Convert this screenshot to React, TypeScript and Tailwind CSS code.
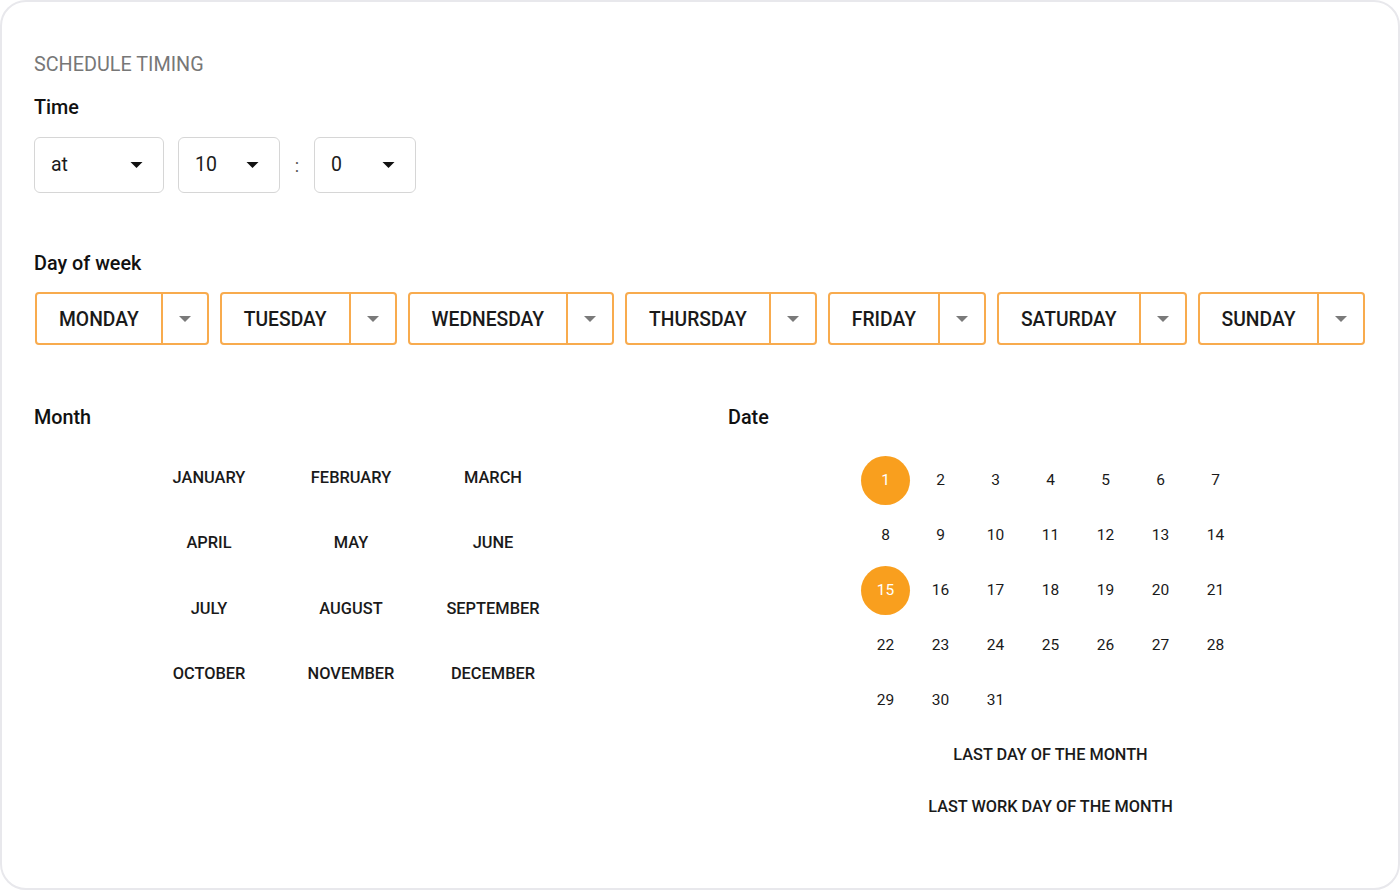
import React from 'react';

const DAYS = ['MONDAY', 'TUESDAY', 'WEDNESDAY', 'THURSDAY', 'FRIDAY', 'SATURDAY', 'SUNDAY'];
const MONTHS = [
  'JANUARY', 'FEBRUARY', 'MARCH',
  'APRIL', 'MAY', 'JUNE',
  'JULY', 'AUGUST', 'SEPTEMBER',
  'OCTOBER', 'NOVEMBER', 'DECEMBER',
];
const DATES = Array.from({ length: 31 }, (_, i) => i + 1);
const SELECTED_DATES = [1, 15];

function Caret({ className }: { className: string }) {
  return (
    <svg viewBox="0 0 12 6" className={className} fill="currentColor">
      <path d="M0 0h12L6 6z" />
    </svg>
  );
}

function TimeSelect({ value, width }: { value: string; width: string }) {
  return (
    <div className={`flex h-[56px] ${width} items-center justify-between rounded-[6px] border border-[#d6d6d6] pl-[16px] pr-[20px] text-[19.5px] text-[#1c1c1c]`}>
      <span>{value}</span>
      <Caret className="h-[6px] w-[13px] text-[#111]" />
    </div>
  );
}

function DayButton({ label }: { label: string }) {
  return (
    <div className="flex h-[53px] items-stretch rounded-[4px] border-2 border-[#f8ab4e]">
      <div className="flex items-center px-[22px] pt-[3px] text-[19.3px] font-medium text-[#1a1a1a]">{label}</div>
      <div className="flex w-[46px] items-center justify-center border-l-2 border-[#f8ab4e]">
        <Caret className="h-[6px] w-[12px] text-[#7a7a7a]" />
      </div>
    </div>
  );
}

export default function App() {
  return (
    <div className="h-[890px] w-[1400px] bg-white font-['Roboto',sans-serif]">
      <div className="h-full w-full rounded-[26px] border-2 border-[#e8e8ec] pl-[32px] pr-[32px] pt-[51px]">
        <h2 className="text-[19.8px] leading-[24px] text-[#777]">SCHEDULE TIMING</h2>

        {/* Time */}
        <h3 className="mt-[19px] text-[19.8px] font-medium leading-[24px] text-[#111]">Time</h3>
        <div className="mt-[17px] flex items-center">
          <TimeSelect value="at" width="w-[130px]" />
          <div className="ml-[14px]">
            <TimeSelect value="10" width="w-[102px]" />
          </div>
          <span className="w-[34px] text-center text-[18px] text-[#555]">:</span>
          <TimeSelect value="0" width="w-[102px]" />
        </div>

        {/* Day of week */}
        <h3 className="mt-[59px] text-[19.8px] font-medium leading-[24px] text-[#111]">Day of week</h3>
        <div className="mt-[16px] flex items-center gap-[11px] pl-[1px]">
          {DAYS.map((d) => (
            <DayButton key={d} label={d} />
          ))}
        </div>

        <div className="mt-[61px] flex">
          {/* Month */}
          <div className="w-[694px]">
            <h3 className="text-[19.8px] font-medium leading-[24px] text-[#111]">Month</h3>
            <div className="ml-[104px] mt-[15px] grid w-[426px] grid-cols-3">
              {MONTHS.map((m) => (
                <div key={m} className="flex h-[65.67px] items-center justify-center text-[16.4px] font-medium text-[#1a1a1a]">
                  {m}
                </div>
              ))}
            </div>
          </div>

          {/* Date */}
          <div className="flex-1">
            <h3 className="text-[19.8px] font-medium leading-[24px] text-[#111]">Date</h3>
            <div className="ml-[130px] mt-[22.5px] w-[385px]">
              <div className="grid grid-cols-7">
                {DATES.map((n) => {
                  const on = SELECTED_DATES.includes(n);
                  return (
                    <div key={n} className="flex h-[55px] items-center justify-center">
                      <span
                        className={`flex h-[49px] w-[49px] items-center justify-center rounded-full pt-[1px] text-[15.5px] ${
                          on ? 'bg-[#f99f1e] text-white' : 'text-[#1a1a1a]'
                        }`}
                      >
                        {n}
                      </span>
                    </div>
                  );
                })}
              </div>
              <div className="flex h-[55px] items-center justify-center text-[16.3px] font-medium text-[#1a1a1a]">
                LAST DAY OF THE MONTH
              </div>
              <div className="flex h-[50px] items-center justify-center text-[16.3px] font-medium text-[#1a1a1a]">
                LAST WORK DAY OF THE MONTH
              </div>
            </div>
          </div>
        </div>
      </div>
    </div>
  );
}
